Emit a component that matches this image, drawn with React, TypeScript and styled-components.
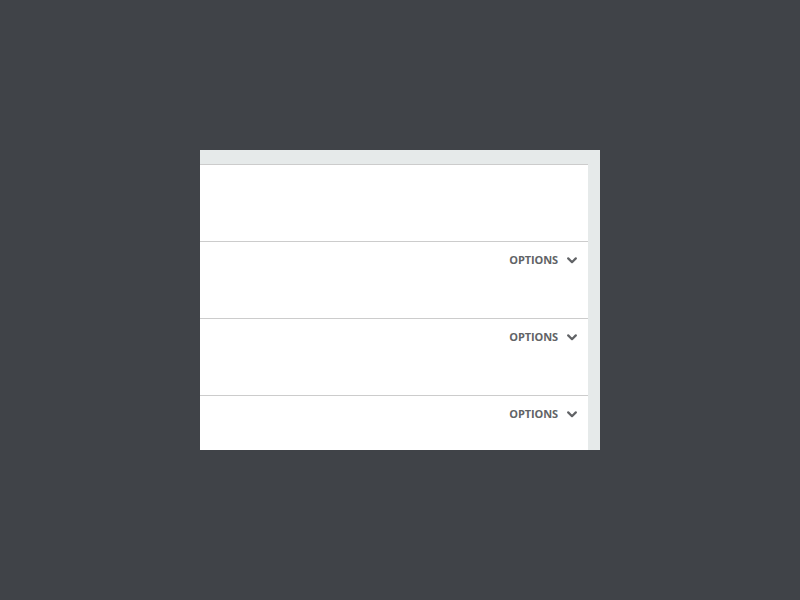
import React, { FC } from 'react';
import styled, { createGlobalStyle } from 'styled-components';

const GlobalStyle = createGlobalStyle`
  html, body, #root {
    margin: 0;
    height: 100%;
  }
  body {
    background: #404348;
    font-family: 'Open Sans', 'Liberation Sans', sans-serif;
  }
`;

interface RowProps {
  hasOptions: boolean;
}

const Chevron: FC = () => (
  <ChevronIcon width='10' height='7' viewBox='0 0 10 7'>
    <polyline
      points='1.2,1.4 5,5.2 8.8,1.4'
      fill='none'
      stroke='#616366'
      strokeWidth='2.2'
      strokeLinecap='round'
      strokeLinejoin='round'
    />
  </ChevronIcon>
);

const ListRow: FC<RowProps> = ({ hasOptions }) => (
  <Row>
    {hasOptions && (
      <OptionsButton>
        <OptionsLabel>OPTIONS</OptionsLabel>
        <Chevron />
      </OptionsButton>
    )}
  </Row>
);

export default function App() {
  const rows = [false, true, true, true];
  return (
    <>
      <GlobalStyle />
      <Page>
        <Panel>
          <List>
            {rows.map((hasOptions, idx) => (
              <ListRow key={idx} hasOptions={hasOptions} />
            ))}
          </List>
        </Panel>
      </Page>
    </>
  );
}

const Page = styled.div`
  height: 100%;
  display: flex;
  align-items: center;
  justify-content: center;
`;

const Panel = styled.div`
  width: 400px;
  height: 300px;
  box-sizing: border-box;
  padding: 14px 12px 0 0;
  background: #e6eaea;
  overflow: hidden;
`;

const List = styled.div`
  background: #fff;
  display: flex;
  flex-direction: column;
`;

const Row = styled.div`
  height: 77px;
  flex-shrink: 0;
  box-sizing: border-box;
  border-top: 1px solid #cccccc;
  display: flex;
  justify-content: flex-end;
  align-items: flex-start;
  padding: 10px 11px 0 0;
`;

const OptionsButton = styled.div`
  display: flex;
  align-items: center;
  gap: 9px;
  height: 15px;
  cursor: pointer;
`;

const OptionsLabel = styled.span`
  font-size: 11px;
  line-height: 15px;
  font-weight: 700;
  letter-spacing: -0.1px;
  color: #616366;
`;

const ChevronIcon = styled.svg`
  display: block;
  margin-top: 2px;
`;
